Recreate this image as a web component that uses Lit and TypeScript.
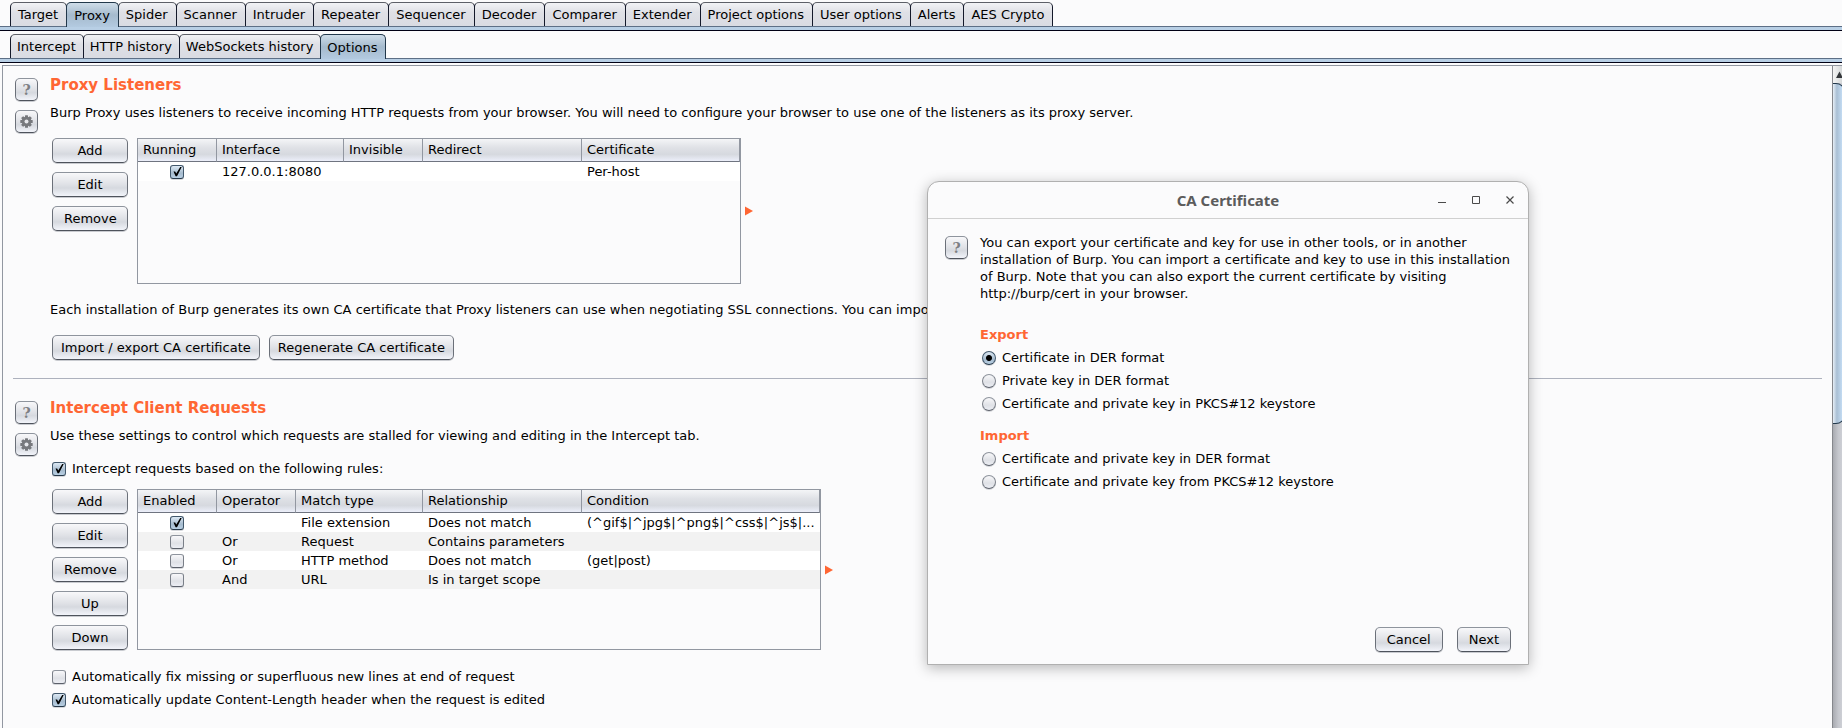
import { LitElement, html, css, svg, nothing } from "lit";
import { customElement, property } from "lit/decorators.js";

const tokens = css`
  :host {
    --bg: #fbfbfc;
    --accent: #ff6633;
    --line: #9297a1;
    font-family: "DejaVu Sans", sans-serif;
    font-size: 13px;
    line-height: 17px;
    color: #000;
  }
  * {
    box-sizing: border-box;
  }
  button,
  input {
    font: inherit;
    color: inherit;
    margin: 0;
  }
`;

const controls = css`
  .btn {
    height: 25px;
    padding: 0 11px;
    border: 1px solid;
    border-color: #8e949d #6b7079 #4e535c;
    border-radius: 5px;
    background: linear-gradient(#f8f8fa 0%, #dfe1e6 50%, #d6d9df 65%, #f2f4fa 100%);
    box-shadow: 0 1px 0 #c9cbd0;
    line-height: 22px;
    white-space: nowrap;
  }
  .check,
  .radio {
    appearance: none;
    flex: none;
    width: 14px;
    height: 14px;
    border: 1px solid;
    border-color: #8e949d #7a7f88 #5b606a;
    border-radius: 3px;
    background: linear-gradient(#f8f8fa, #dfe1e6 60%, #eceef4);
    box-shadow: 0 1px 0 #d5d7db;
  }
  .radio {
    border-radius: 50%;
  }
  .check:checked {
    border-color: #41576b #41576b #26394a;
    background:
      url("data:image/svg+xml,%3Csvg xmlns='http://www.w3.org/2000/svg' viewBox='0 0 12 12'%3E%3Cpath d='M2.5 5.5h1.6l1.2 2L9.2 1h1.5L6 10.3H4.6z'/%3E%3C/svg%3E"),
      linear-gradient(#dde9f4, #a6bbce 60%, #b9d0e4);
  }
  .radio:checked {
    border-color: #41576b #41576b #26394a;
    background:
      radial-gradient(circle, #000 0 2.5px, transparent 3.5px),
      linear-gradient(#dde9f4, #a6bbce 60%, #b9d0e4);
  }
  .choice {
    display: flex;
    align-items: center;
    gap: 6px;
    height: 23px;
  }
`;

@customElement("tab-strip")
class TabStrip extends LitElement {
  @property({ attribute: false }) tabs: string[] = [];
  @property() active = "";

  static styles = [
    tokens,
    css`
      :host {
        display: block;
      }
      .tabs {
        display: flex;
        padding-left: 10px;
      }
      .tab {
        height: 24px;
        padding: 0 8px 0 7px;
        margin-right: -1px;
        border: 1px solid #14192a;
        border-top-color: #5d6068;
        border-bottom: 0;
        border-radius: 5px 5px 0 0;
        background: linear-gradient(#f2f3f6, #dfe0e6 40%, #d9dbe2);
        line-height: 21px;
        white-space: nowrap;
      }
      :host([compact]) .tab {
        padding: 0 7px 0 6px;
      }
      .tab[aria-selected="true"] {
        border-color: #22384b;
        background: linear-gradient(#cfdde9, #a5bacd 50%, #b3cae0);
        margin-bottom: -1px;
        height: 25px;
        z-index: 1;
      }
      .band {
        height: 5px;
        border-top: 1px solid #5d6f86;
        border-bottom: 1px solid #000014;
        background: #b8cfe5;
      }
    `,
  ];

  render() {
    return html`
      <div class="tabs" role="tablist">
        ${this.tabs.map(
          (t) => html`<button class="tab" role="tab" aria-selected=${t === this.active ? "true" : "false"}>${t}</button>`,
        )}
      </div>
      <div class="band"></div>
    `;
  }
}

@customElement("icon-button")
class IconButton extends LitElement {
  @property() icon: "help" | "gear" = "help";

  static styles = [
    tokens,
    controls,
    css`
      :host {
        display: block;
      }
      .square {
        display: grid;
        place-items: center;
        width: 23px;
        height: 23px;
        padding: 0;
        color: #7d7f83;
        font-family: "DejaVu Serif", serif;
        font-size: 14px;
        font-weight: bold;
        line-height: 20px;
      }
    `,
  ];

  render() {
    const help = this.icon === "help";
    return html`
      <button class="btn square" aria-label=${help ? "Help" : "Settings"}>
        ${help
          ? "?"
          : html`<svg width="13" height="13" viewBox="-6.5 -6.5 13 13">
              ${[0, 45, 90, 135].map(
                (a) => svg`<rect x="-1.5" y="-6.2" width="3" height="12.4" rx=".5" fill="#77797d" transform="rotate(${a})" />`,
              )}
              <circle r="4.8" fill="#77797d" />
              <circle r="2" fill="#e6e7eb" />
            </svg>`}
      </button>
    `;
  }
}

interface Column {
  label: string;
  width: number;
}

@customElement("rule-table")
class RuleTable extends LitElement {
  @property({ attribute: false }) columns: Column[] = [];
  @property({ attribute: false }) rows: (string | boolean)[][] = [];

  static styles = [
    tokens,
    controls,
    css`
      :host {
        display: block;
        border: 1px solid var(--line);
      }
      table {
        border-collapse: separate;
        border-spacing: 0;
        table-layout: fixed;
        width: 100%;
      }
      th {
        height: 23px;
        padding: 0 5px 1px;
        border-right: 1px solid var(--line);
        border-bottom: 1px solid #6f7480;
        background: linear-gradient(#f4f5f7, #dfe1e6 40%, #d6d9df 70%, #eceffa);
        font-weight: normal;
        text-align: left;
      }
      td {
        height: 19px;
        padding: 0 0 0 5px;
        background: #fff;
        white-space: nowrap;
      }
      tr:nth-child(even) td {
        background: #f2f2f2;
      }
      .tick {
        padding: 0 2px 0 0;
      }
      .check {
        display: block;
        margin: 0 auto;
      }
    `,
  ];

  render() {
    return html`
      <table>
        <colgroup>
          ${this.columns.map((c) => html`<col style="width:${c.width}px" />`)}
        </colgroup>
        <thead>
          <tr>
            ${this.columns.map((c) => html`<th scope="col">${c.label}</th>`)}
          </tr>
        </thead>
        <tbody>
          ${this.rows.map(
            (r) => html`<tr>
              ${r.map((v, i) =>
                typeof v === "boolean"
                  ? html`<td class="tick">
                      <input class="check" type="checkbox" aria-label=${this.columns[i].label} .checked=${v} />
                    </td>`
                  : html`<td>${v || nothing}</td>`,
              )}
            </tr>`,
          )}
        </tbody>
      </table>
    `;
  }
}

@customElement("ca-dialog")
class CaDialog extends LitElement {
  static styles = [
    tokens,
    controls,
    css`
      :host {
        display: flex;
        flex-direction: column;
        border: 1px solid #b0b0b0;
        border-radius: 12px 12px 0 0;
        background: var(--bg);
        box-shadow: 0 3px 14px rgba(0, 0, 0, 0.28);
      }
      .bar {
        display: grid;
        grid-template-columns: 1fr auto 1fr;
        align-items: center;
        height: 37px;
        border-bottom: 1px solid #d0d0d0;
      }
      .title {
        grid-column: 2;
        margin: 0;
        color: #5c5c5c;
        font: bold 15px "Noto Sans", sans-serif;
      }
      .window {
        display: flex;
        justify-content: flex-end;
        gap: 14px;
        padding-right: 8px;
      }
      .window button {
        display: grid;
        place-items: center;
        width: 20px;
        height: 20px;
        padding: 0;
        border: 0;
        background: none;
      }
      .body {
        display: flex;
        flex: 1;
        gap: 12px;
        padding: 15px 14px 0 17px;
      }
      .help {
        margin-top: 2px;
      }
      p {
        margin: 0 0 24px;
      }
      fieldset {
        margin: 0 0 12px;
        padding: 0;
        border: 0;
      }
      legend {
        padding: 0 0 3px;
        color: var(--accent);
        font-weight: bold;
      }
      .choice {
        padding-left: 2px;
      }
      .foot {
        display: flex;
        justify-content: flex-end;
        gap: 14px;
        padding: 0 17px 12px;
      }
    `,
  ];

  private radio(label: string, checked = false) {
    return html`<label class="choice"><input class="radio" type="radio" name="format" .checked=${checked} />${label}</label>`;
  }

  render() {
    return html`
      <div class="bar">
        <h2 class="title">CA Certificate</h2>
        <div class="window">
          <button aria-label="Minimize">
            <svg width="10" height="10"><path d="M1 7.5h8" stroke="#4a4a4a" /></svg>
          </button>
          <button aria-label="Maximize">
            <svg width="10" height="10"><path d="M1.5 1.5h7v7h-7z" stroke="#4a4a4a" fill="none" /></svg>
          </button>
          <button aria-label="Close">
            <svg width="10" height="10"><path d="M1.5 1.5l7 7m0-7l-7 7" stroke="#4a4a4a" stroke-width="1.2" /></svg>
          </button>
        </div>
      </div>
      <div class="body">
        <icon-button class="help" icon="help"></icon-button>
        <div>
          <p>
            You can export your certificate and key for use in other tools, or in another installation of Burp. You can
            import a certificate and key to use in this installation of Burp. Note that you can also export the current
            certificate by visiting http://burp/cert in your browser.
          </p>
          <fieldset>
            <legend>Export</legend>
            ${this.radio("Certificate in DER format", true)} ${this.radio("Private key in DER format")}
            ${this.radio("Certificate and private key in PKCS#12 keystore")}
          </fieldset>
          <fieldset>
            <legend>Import</legend>
            ${this.radio("Certificate and private key in DER format")}
            ${this.radio("Certificate and private key from PKCS#12 keystore")}
          </fieldset>
        </div>
      </div>
      <div class="foot">
        <button class="btn">Cancel</button>
        <button class="btn">Next</button>
      </div>
    `;
  }
}

const listenerColumns: Column[] = [
  { label: "Running", width: 79 },
  { label: "Interface", width: 127 },
  { label: "Invisible", width: 79 },
  { label: "Redirect", width: 159 },
  { label: "Certificate", width: 158 },
];

const ruleColumns: Column[] = [
  { label: "Enabled", width: 79 },
  { label: "Operator", width: 79 },
  { label: "Match type", width: 127 },
  { label: "Relationship", width: 159 },
  { label: "Condition", width: 238 },
];

@customElement("app-root")
class AppRoot extends LitElement {
  static styles = [
    tokens,
    controls,
    css`
      :host {
        display: flex;
        flex-direction: column;
        position: relative;
        height: 100vh;
        box-sizing: border-box;
        padding-top: 2px;
        overflow: hidden;
        background: var(--bg);
      }
      .sub {
        margin-top: 3px;
      }
      .panel {
        display: flex;
        flex: 1;
        min-height: 0;
        margin: 2px 0 0 2px;
        border: solid var(--line);
        border-width: 1px 0 0 1px;
      }
      .content {
        flex: 1;
        min-width: 0;
        overflow: hidden;
        padding: 0 10px;
      }
      section {
        display: grid;
        grid-template-columns: 23px 1fr;
        column-gap: 12px;
        padding: 8px 0 18px 2px;
      }
      section + section {
        border-top: 1px solid #adb1bd;
        padding-top: 18px;
      }
      .side {
        display: flex;
        flex-direction: column;
        gap: 9px;
        padding-top: 4px;
      }
      h2 {
        margin: 0;
        color: var(--accent);
        font-size: 15px;
        line-height: 22px;
      }
      p {
        margin: 8px 0 0;
        white-space: nowrap;
      }
      .row {
        display: flex;
        padding-left: 2px;
        margin-top: 17px;
      }
      .stack {
        display: flex;
        flex-direction: column;
        gap: 9px;
        width: 76px;
        margin-right: 9px;
      }
      .listeners {
        width: 604px;
        height: 146px;
      }
      .rules {
        width: 684px;
        height: 161px;
      }
      .arrow {
        align-self: center;
        margin-left: 4px;
      }
      .note {
        margin-top: 17px;
      }
      .actions {
        gap: 9px;
      }
      .actions .btn {
        padding: 0 8px;
      }
      .master {
        margin: 13px 0 9px;
      }
      .choice {
        padding-left: 2px;
      }
      .tight {
        margin-top: 0;
      }
      .after {
        margin-top: 15px;
      }
      .scroll {
        display: flex;
        flex-direction: column;
        width: 10px;
        border-left: 1px solid #85878c;
        background: linear-gradient(90deg, #a9abb1, #c5c7cd 60%, #cdcfd5);
        overflow: hidden;
      }
      .up {
        height: 17px;
        flex: none;
        background: linear-gradient(90deg, #f4f4f4, #d6d9da);
      }
      .thumb {
        flex: none;
        width: 12px;
        height: 341px;
        border: 1px solid #22384b;
        border-left: 0;
        border-radius: 0 9px 9px 0;
        background: linear-gradient(90deg, #e6eef6, #a9bfd4 35%, #c2daf1 80%);
      }
      .dialog {
        position: absolute;
        top: 181px;
        left: calc(50% + 6px);
        width: 602px;
        height: 484px;
      }
    `,
  ];

  private buttons(labels: string[]) {
    return html`<div class="stack">${labels.map((l) => html`<button class="btn">${l}</button>`)}</div>`;
  }

  private arrow() {
    return html`<svg class="arrow" width="8" height="10"><path d="M0 0.5v9L8 5z" fill="#ff6633" /></svg>`;
  }

  private choice(label: string, checked: boolean, extra: string) {
    return html`<label class="choice ${extra}"><input class="check" type="checkbox" .checked=${checked} />${label}</label>`;
  }

  private side() {
    return html`<div class="side">
      <icon-button icon="help"></icon-button>
      <icon-button icon="gear"></icon-button>
    </div>`;
  }

  render() {
    return html`
      <tab-strip
        .tabs=${["Target", "Proxy", "Spider", "Scanner", "Intruder", "Repeater", "Sequencer", "Decoder", "Comparer", "Extender", "Project options", "User options", "Alerts", "AES Crypto"]}
        active="Proxy"
      ></tab-strip>
      <tab-strip
        class="sub"
        compact
        .tabs=${["Intercept", "HTTP history", "WebSockets history", "Options"]}
        active="Options"
      ></tab-strip>
      <div class="panel">
        <main class="content">
          <section>
            ${this.side()}
            <div>
              <h2>Proxy Listeners</h2>
              <p>
                Burp Proxy uses listeners to receive incoming HTTP requests from your browser. You will need to
                configure your browser to use one of the listeners as its proxy server.
              </p>
              <div class="row">
                ${this.buttons(["Add", "Edit", "Remove"])}
                <rule-table
                  class="listeners"
                  .columns=${listenerColumns}
                  .rows=${[[true, "127.0.0.1:8080", "", "", "Per-host"]]}
                ></rule-table>
                ${this.arrow()}
              </div>
              <p class="note">
                Each installation of Burp generates its own CA certificate that Proxy listeners can use when negotiating
                SSL connections. You can import or
              </p>
              <div class="row actions">
                <button class="btn">Import / export CA certificate</button>
                <button class="btn">Regenerate CA certificate</button>
              </div>
            </div>
          </section>
          <section>
            ${this.side()}
            <div>
              <h2>Intercept Client Requests</h2>
              <p>Use these settings to control which requests are stalled for viewing and editing in the Intercept tab.</p>
              ${this.choice("Intercept requests based on the following rules:", true, "master")}
              <div class="row tight">
                ${this.buttons(["Add", "Edit", "Remove", "Up", "Down"])}
                <rule-table
                  class="rules"
                  .columns=${ruleColumns}
                  .rows=${[
                    [true, "", "File extension", "Does not match", "(^gif$|^jpg$|^png$|^css$|^js$|..."],
                    [false, "Or", "Request", "Contains parameters", ""],
                    [false, "Or", "HTTP method", "Does not match", "(get|post)"],
                    [false, "And", "URL", "Is in target scope", ""],
                  ]}
                ></rule-table>
                ${this.arrow()}
              </div>
              ${this.choice("Automatically fix missing or superfluous new lines at end of request", false, "after")}
              ${this.choice("Automatically update Content-Length header when the request is edited", true, "")}
            </div>
          </section>
        </main>
        <div class="scroll" aria-hidden="true">
          <div class="up"><svg width="16" height="18"><path d="M3 12L6.500 5.500l3.500 6.500z" fill="#33363a" /></svg></div>
          <div class="thumb"></div>
        </div>
      </div>
      <ca-dialog class="dialog" role="dialog" aria-label="CA Certificate"></ca-dialog>
    `;
  }
}
